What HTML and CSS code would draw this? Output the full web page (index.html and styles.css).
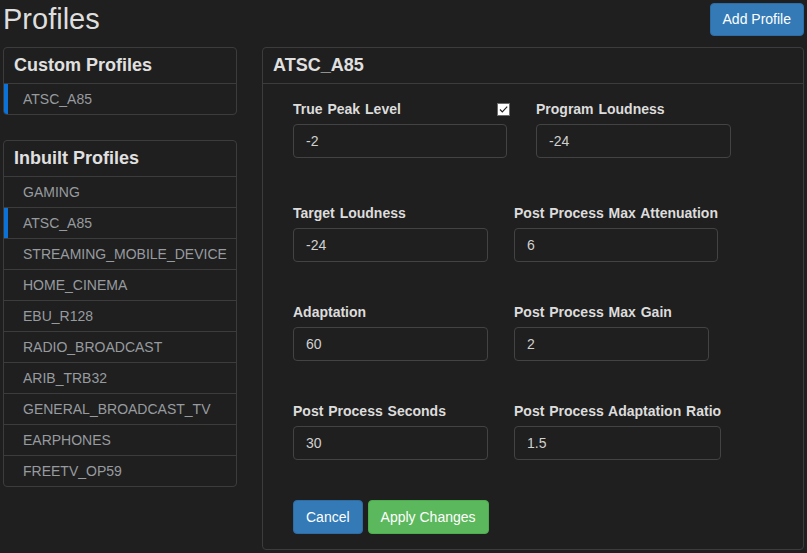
FILE: index.html
```html
<!DOCTYPE html>
<html lang="en">
<head>
<meta charset="utf-8">
<title>Profiles</title>
<link rel="stylesheet" href="styles.css">
</head>
<body>
<div class="page">
  <header class="topbar">
    <h1 class="title">Profiles</h1>
    <button class="btn btn-primary btn-add" type="button">Add Profile</button>
  </header>
  <div class="layout">
    <aside class="sidebar">
      <section class="panel">
        <div class="panel-heading">Custom Profiles</div>
        <ul class="list">
          <li class="item active">ATSC_A85</li>
        </ul>
      </section>
      <section class="panel">
        <div class="panel-heading">Inbuilt Profiles</div>
        <ul class="list">
          <li class="item">GAMING</li>
          <li class="item active">ATSC_A85</li>
          <li class="item">STREAMING_MOBILE_DEVICE</li>
          <li class="item">HOME_CINEMA</li>
          <li class="item">EBU_R128</li>
          <li class="item">RADIO_BROADCAST</li>
          <li class="item">ARIB_TRB32</li>
          <li class="item">GENERAL_BROADCAST_TV</li>
          <li class="item">EARPHONES</li>
          <li class="item">FREETV_OP59</li>
        </ul>
      </section>
    </aside>
    <main class="panel editor">
      <div class="panel-heading heading-editor">ATSC_A85</div>
      <form class="editor-body">
        <div class="form-row row-first">
          <div class="field field-peak">
            <div class="field-label"><label>True Peak Level</label><span class="check"><svg width="11" height="11" viewBox="0 0 11 11"><path d="M2 5.5 L4.3 7.8 L9.2 2.6" fill="none" stroke="#222" stroke-width="1.2"/></svg></span></div>
            <input class="input" type="text" value="-2">
          </div>
          <div class="field">
            <div class="field-label"><label>Program Loudness</label></div>
            <input class="input" type="text" value="-24">
          </div>
        </div>
        <div class="form-row">
          <div class="field">
            <div class="field-label"><label>Target Loudness</label></div>
            <input class="input" type="text" value="-24">
          </div>
          <div class="field">
            <div class="field-label"><label>Post Process Max Attenuation</label></div>
            <input class="input" type="text" value="6">
          </div>
        </div>
        <div class="form-row">
          <div class="field">
            <div class="field-label"><label>Adaptation</label></div>
            <input class="input" type="text" value="60">
          </div>
          <div class="field">
            <div class="field-label"><label>Post Process Max Gain</label></div>
            <input class="input" type="text" value="2">
          </div>
        </div>
        <div class="form-row">
          <div class="field">
            <div class="field-label"><label>Post Process Seconds</label></div>
            <input class="input" type="text" value="30">
          </div>
          <div class="field">
            <div class="field-label"><label>Post Process Adaptation Ratio</label></div>
            <input class="input" type="text" value="1.5">
          </div>
        </div>
        <div class="actions">
          <button class="btn btn-primary" type="button">Cancel</button>
          <button class="btn btn-success" type="button">Apply Changes</button>
        </div>
      </form>
    </main>
  </div>
</div>
</body>
</html>
```
FILE: styles.css
```css
* { box-sizing: border-box; }
html, body {
  margin: 0;
  background: #1f1f1f;
  font-family: "Liberation Sans", Arial, sans-serif;
  font-size: 14px;
  color: #dcdcdc;
}
.page {
  padding: 3px 3px 0 3px;
}
.topbar {
  display: flex;
  justify-content: space-between;
  align-items: flex-start;
  height: 44px;
}
.title {
  margin: -1px 0 0 0;
  font-size: 29px;
  font-weight: normal;
  line-height: 34px;
  color: #dedede;
}
.btn {
  font-family: "Liberation Sans", Arial, sans-serif;
  font-size: 14px;
  line-height: 20px;
  padding: 6px 12px;
  border: 1px solid transparent;
  border-radius: 4px;
  color: #fff;
  cursor: pointer;
  height: 34px;
}
.btn-add { height: 33px; padding-top: 5px; padding-bottom: 6px; }
.btn-primary { background: #337ab7; border-color: #2e6da4; }
.btn-success { background: #5cb85c; border-color: #4cae4c; }
.layout {
  display: flex;
  gap: 25px;
  align-items: flex-start;
}
.sidebar {
  width: 234px;
  flex: none;
  display: flex;
  flex-direction: column;
  gap: 25px;
}
.panel {
  border: 1px solid #3c3c3c;
  border-radius: 4px;
  background: #1f1f1f;
  overflow: hidden;
}
.panel-heading {
  height: 36px;
  line-height: 35px;
  padding: 0 10px;
  border-bottom: 1px solid #3c3c3c;
  font-size: 18px;
  font-weight: bold;
  color: #e0e0e0;
}
.list {
  list-style: none;
  margin: 0;
  padding: 0;
}
.item {
  height: 31px;
  line-height: 30px;
  padding-left: 19px;
  border-bottom: 1px solid #3c3c3c;
  color: #979b9f;
  font-size: 14px;
  white-space: nowrap;
}
.item:last-child { border-bottom: 0; height: 30px; }
.item.active { box-shadow: inset 4px 0 0 #0b72d8; }
.editor {
  flex: 1;
}
.editor-body {
  padding: 15px 30px 15px 30px;
  margin: 0;
}
.form-row {
  display: flex;
  gap: 26px;
  margin-bottom: 40px;
}
.form-row.row-first { margin-bottom: 45px; }
.field {
  min-width: 195px;
  white-space: nowrap;
}
.field-peak {
  width: 214px;
  margin-right: 3px;
}
.field-label {
  display: flex;
  align-items: center;
  justify-content: space-between;
  height: 20px;
  margin-bottom: 5px;
  font-weight: bold;
  font-size: 14px;
  word-spacing: 1px;
  color: #dcdcdc;
}
.check {
  width: 13px;
  height: 13px;
  margin-right: -3px;
  background: #fff;
  border: 1px solid #6d6d6d;
  display: flex;
  align-items: center;
  justify-content: center;
}
.check svg { display: block; }
.input {
  display: block;
  width: 0;
  min-width: 100%;
  height: 34px;
  padding: 6px 12px;
  background: #1f1f1f;
  border: 1px solid #434343;
  border-radius: 4px;
  color: #d0d0d0;
  font-family: "Liberation Sans", Arial, sans-serif;
  font-size: 14px;
  outline: none;
}
.actions {
  display: flex;
  gap: 5px;
}
```
